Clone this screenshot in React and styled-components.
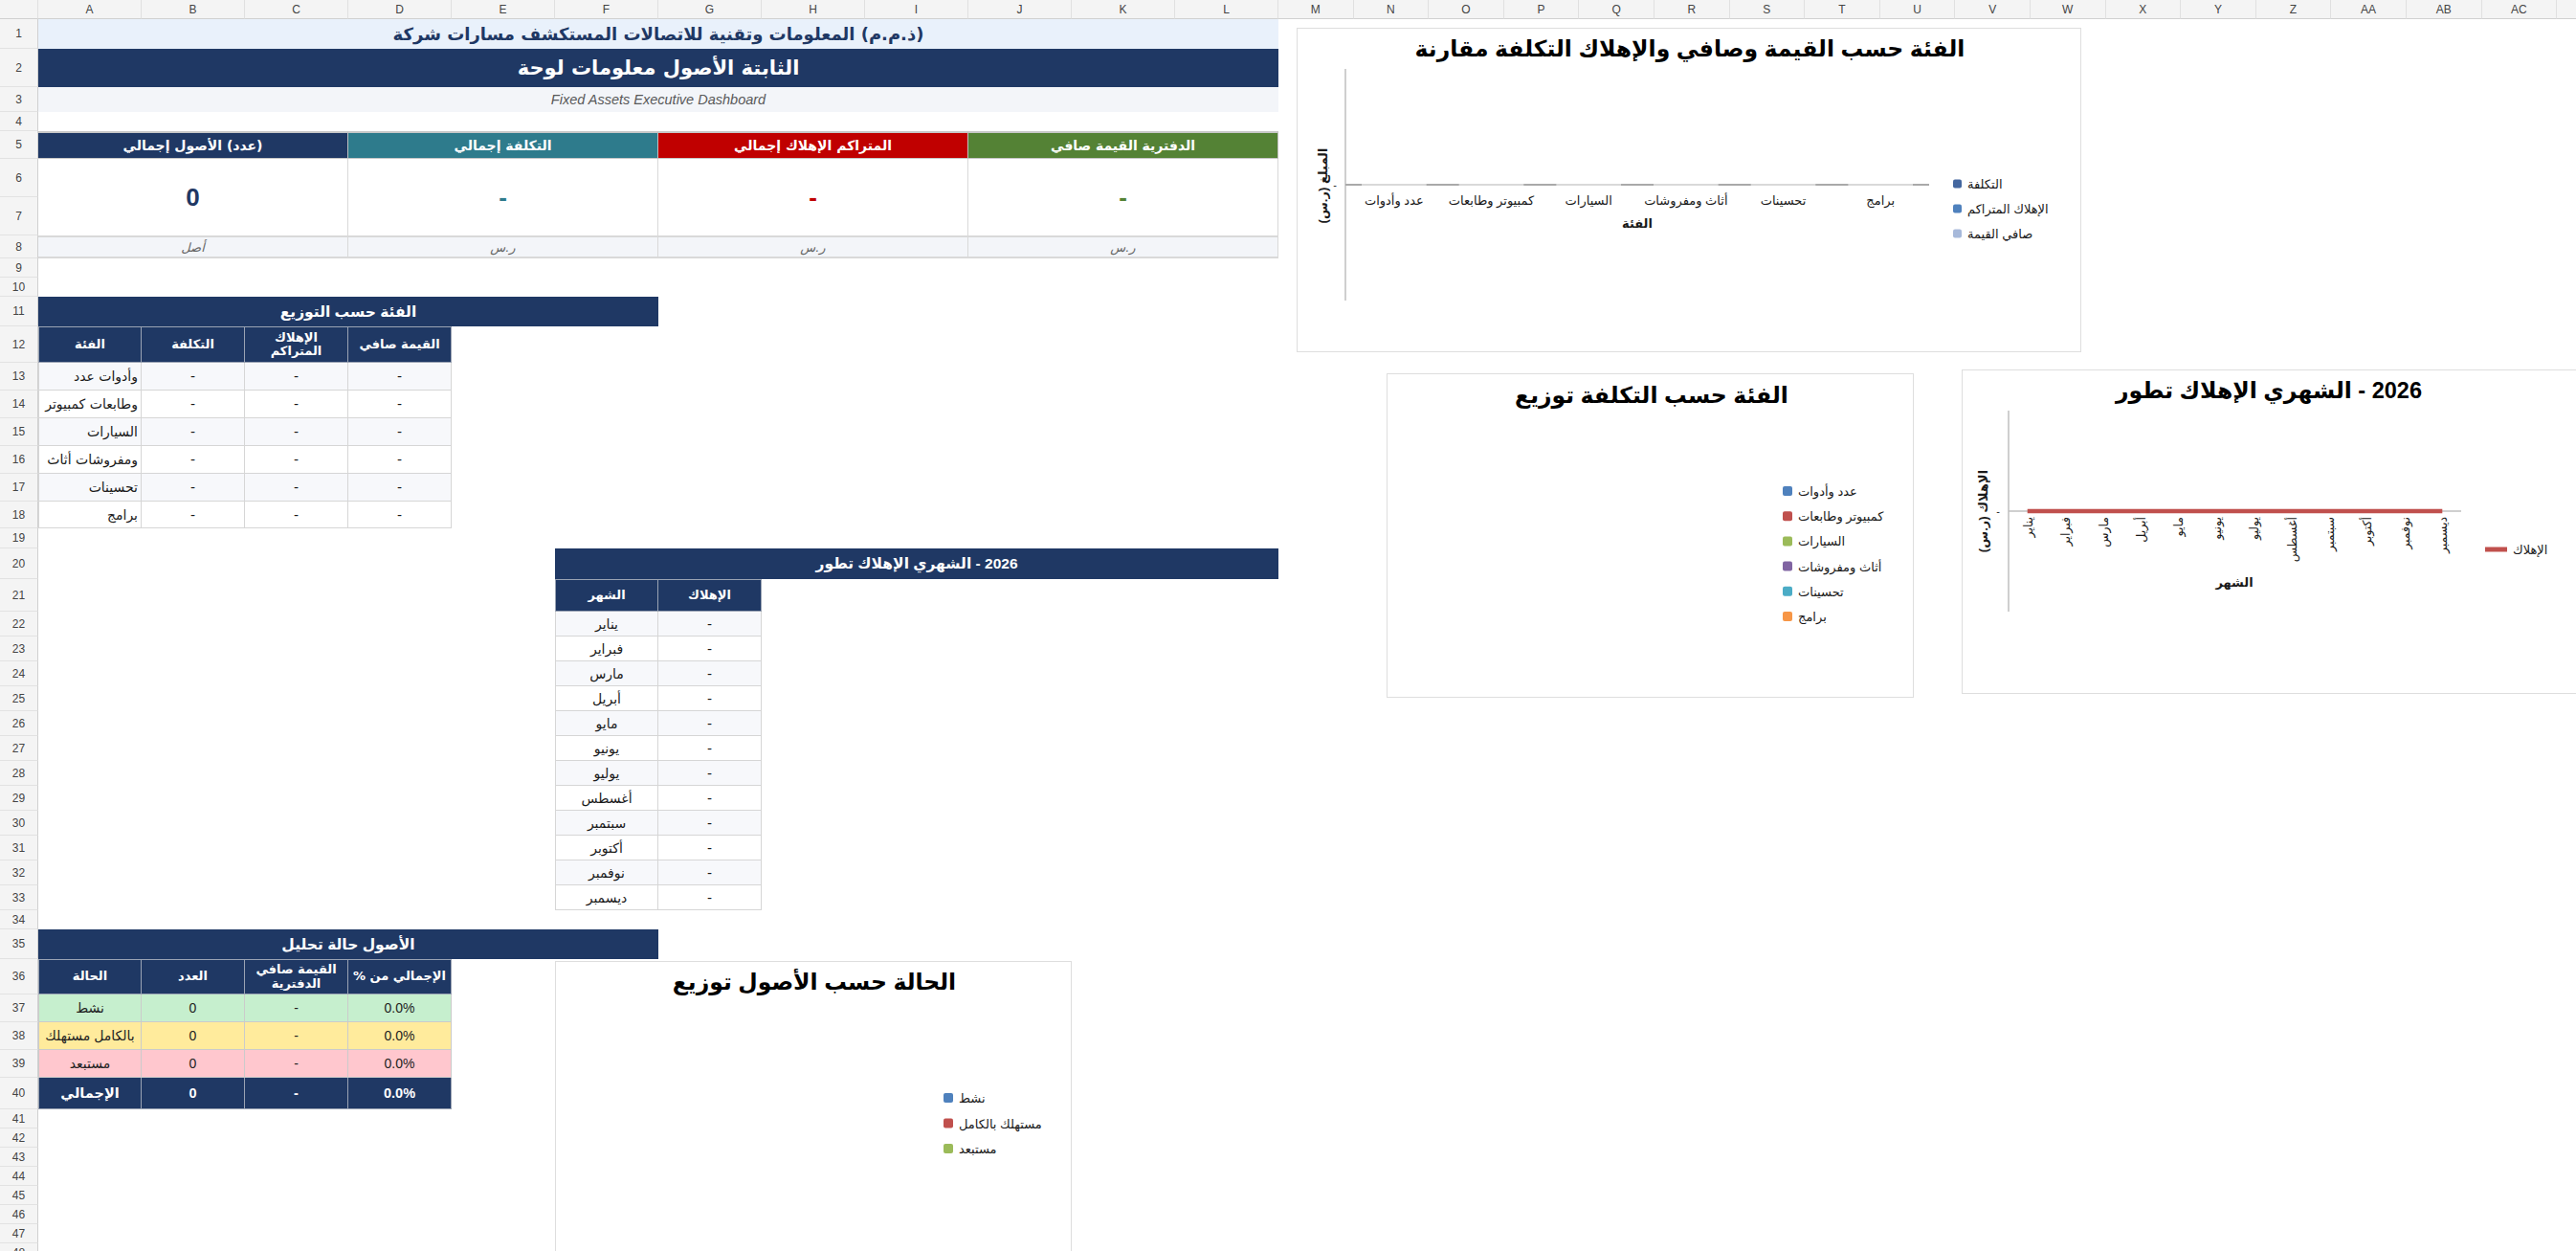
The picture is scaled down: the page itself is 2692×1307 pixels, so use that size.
import React from "react";
import styled, { createGlobalStyle, css } from "styled-components";

const NAVY = "#1f3864";
const UI_FONT = `"Liberation Sans", "DejaVu Sans", Arial, sans-serif`;
const AR_FONT = `"DejaVu Sans", "Liberation Sans", sans-serif`;
const CHART_FONT = `"Liberation Sans", "DejaVu Sans", sans-serif`;

const GlobalStyle = createGlobalStyle`
  html, body { margin: 0; padding: 0; background: #fff; }
  body { font-family: ${UI_FONT}; overflow: hidden; }
`;

/* sheet geometry: row-header column + A..L wide columns + M..AD narrow ones */
const COLS = [40, ...Array(12).fill(108), ...Array(17).fill(78.6), 80];
const ROWS = [
  20, 31, 40, 26, 20, 29, 40, 40, 24, 20, 20, 31, 38,
  29, 29, 29, 29, 29, 28, 21, 32, 34,
  ...Array(12).fill(26),
  20, 31, 37, 29, 29, 29, 33,
  ...Array(8).fill(20),
];
const LETTERS = [
  "A","B","C","D","E","F","G","H","I","J","K","L","M","N","O","P","Q","R","S","T",
  "U","V","W","X","Y","Z","AA","AB","AC","",
];

// 1-based sheet column / row -> grid line spans
const col = (a, b = a) => `${a + 1} / ${b + 2}`;
const row = (a, b = a) => `${a + 1} / ${b + 2}`;

const cellBase = css`
  grid-column: ${(p) => p.$c};
  grid-row: ${(p) => p.$r};
  display: flex;
  align-items: center;
  justify-content: center;
  box-sizing: border-box;
  min-width: 0;
  overflow: hidden;
  white-space: nowrap;
`;

const Sheet = styled.div`
  position: relative;
  display: grid;
  grid-template-columns: ${COLS.map((w) => w + "px").join(" ")};
  grid-template-rows: ${ROWS.map((h) => h + "px").join(" ")};
  width: 2692px;
  height: 1307px;
  overflow: hidden;
  background: #fff;
`;

const ColHead = styled.div`
  ${cellBase}
  background: #f4f4f4;
  color: #444;
  font-size: 12px;
  border-right: 1px solid #e0e0e0;
  border-bottom: 1px solid #d0d0d0;
`;

const RowHead = styled.div`
  ${cellBase}
  background: #f4f4f4;
  color: #444;
  font-size: 12px;
  border-right: 1px solid #d0d0d0;
  border-bottom: 1px solid #e2e2e2;
`;

const BrandBand = styled.div`
  ${cellBase}
  background: #e9f1fb;
  color: ${NAVY};
  font-family: ${AR_FONT};
  font-weight: bold;
  font-size: 18px;
`;

const TitleBand = styled.div`
  ${cellBase}
  background: ${NAVY};
  color: #fff;
  font-family: ${AR_FONT};
  font-weight: bold;
  font-size: 21px;
`;

const SubtitleBand = styled.div`
  ${cellBase}
  background: #f3f5f9;
  color: #595959;
  font-style: italic;
  font-size: 14.5px;
`;

const KpiHead = styled.div`
  ${cellBase}
  background: ${(p) => p.$bg};
  color: #fff;
  font-family: ${AR_FONT};
  font-weight: bold;
  font-size: 14px;
  border-top: 2px solid #c8c8c8;
  border-right: 1px solid #c0c0c0;
  border-bottom: 1px solid #c8c8c8;
`;

const KpiValue = styled.div`
  ${cellBase}
  background: #fff;
  color: ${(p) => p.$fg};
  font-weight: bold;
  font-size: 26px;
  border-right: 1px solid #d9d9d9;
`;

const KpiUnit = styled.div`
  ${cellBase}
  background: #f3f5f9;
  color: #666;
  font-family: ${AR_FONT};
  font-style: italic;
  font-size: 13px;
  border-top: 2px solid #d9d9d9;
  border-bottom: 2px solid #d9d9d9;
  border-right: 1px solid #d9d9d9;
`;

const SectionTitle = styled.div`
  ${cellBase}
  background: ${NAVY};
  color: #fff;
  font-family: ${CHART_FONT};
  font-weight: bold;
  font-size: 15.5px;
`;

const HeadCell = styled.div`
  ${cellBase}
  background: ${NAVY};
  color: #fff;
  font-family: ${AR_FONT};
  font-weight: bold;
  font-size: 13px;
  line-height: 1.1;
  text-align: center;
  white-space: normal;
  border-top: 1px solid #9aa3b3;
  border-right: 1px solid #9aa3b3;
  border-bottom: 1px solid #9aa3b3;
  border-left: ${(p) => (p.$lead ? "1px solid #9aa3b3" : "none")};
`;

/* Arabic cells are dir="rtl", so flex-start is the right-hand edge */
const BodyCell = styled.div`
  ${cellBase}
  background: ${(p) => (p.$zebra ? "#f7f8fb" : "#fff")};
  color: #1a1a1a;
  font-family: ${AR_FONT};
  font-size: 14px;
  justify-content: ${(p) => (p.$align === "start" ? "flex-start" : "center")};
  padding-right: ${(p) => (p.$align === "start" ? "3px" : "0")};
  border-right: 1px solid #d6d6d6;
  border-bottom: 1px solid #d6d6d6;
  border-left: ${(p) => (p.$lead ? "1px solid #d6d6d6" : "none")};
`;

const TONES = { ok: "#c6efce", warn: "#ffeb9c", bad: "#ffc7ce" };

const StatusCell = styled.div`
  ${cellBase}
  background: ${(p) => TONES[p.$tone]};
  color: #222;
  font-size: 14px;
  border-right: 1px solid #cbcbcb;
  border-bottom: 1px solid #cbcbcb;
  border-left: ${(p) => (p.$lead ? "1px solid #cbcbcb" : "none")};
`;

const TotalCell = styled.div`
  ${cellBase}
  background: ${NAVY};
  color: #fff;
  font-weight: bold;
  font-size: 14.5px;
  border-right: 1px solid #9aa3b3;
  border-bottom: 1px solid #9aa3b3;
  border-left: ${(p) => (p.$lead ? "1px solid #9aa3b3" : "none")};
`;

/* floating chart objects laid over the sheet */
const ChartFrame = styled.div`
  position: absolute;
  left: ${(p) => p.$left}px;
  top: ${(p) => p.$top}px;
  width: ${(p) => p.$w}px;
  height: ${(p) => p.$h}px;
  box-sizing: border-box;
  background: #fff;
  border: 1px solid #dedede;
  overflow: hidden;

  svg {
    display: block;
  }
`;

const SvgTitle = styled.text`
  font-family: ${CHART_FONT};
  font-size: 23.5px;
  font-weight: bold;
  fill: #000;
`;

const SvgLabel = styled.text`
  font-family: ${CHART_FONT};
  font-size: ${(p) => p.$size || 13}px;
  font-weight: ${(p) => (p.$bold ? "bold" : "normal")};
  fill: ${(p) => p.$fill || "#1a1a1a"};
`;

const CATEGORIES_CHART = ["عدد وأدوات", "كمبيوتر وطابعات", "السيارات", "أثاث ومفروشات", "تحسينات", "برامج"];
const CATEGORIES_TABLE = ["وأدوات عدد", "وطابعات كمبيوتر", "السيارات", "ومفروشات أثاث", "تحسينات", "برامج"];
const PIE_COLORS = ["#4f81bd", "#c0504d", "#9bbb59", "#8064a2", "#4bacc6", "#f79646"];
const MONTHS = ["يناير", "فبراير", "مارس", "أبريل", "مايو", "يونيو", "يوليو", "أغسطس", "سبتمبر", "أكتوبر", "نوفمبر", "ديسمبر"];

function LegendItem({ x, y, color, label, size = 10 }) {
  return (
    <g>
      <rect x={x} y={y - size / 2} width={size} height={size} rx="2" fill={color} />
      <SvgLabel x={x + size + 6} y={y + 5}>{label}</SvgLabel>
    </g>
  );
}

function CostCompareChart() {
  const left = 50;
  const right = 660;
  const axisY = 163;
  const step = (right - left) / 6;
  const series = [
    ["التكلفة", "#44679f"],
    ["الإهلاك المتراكم", "#4f81bd"],
    ["صافي القيمة", "#a7b9da"],
  ];
  return (
    <ChartFrame $left={1355} $top={29} $w={820} $h={339}>
      <svg width="820" height="339">
        <SvgTitle x="410" y="29" textAnchor="middle" direction="rtl">
          الفئة حسب القيمة وصافي والإهلاك التكلفة مقارنة
        </SvgTitle>
        <line x1={left} y1="42" x2={left} y2="284" stroke="#bfbfbf" strokeWidth="1.5" />
        <line x1={left} y1={axisY} x2={right} y2={axisY} stroke="#d9d9d9" strokeWidth="2" />
        {Array.from({ length: 7 }, (_, i) => {
          const bx = left + i * step;
          return (
            <line
              key={i}
              x1={Math.max(left, bx - 17)}
              x2={Math.min(right, bx + 17)}
              y1={axisY}
              y2={axisY}
              stroke="#a9a9a9"
              strokeWidth="2"
            />
          );
        })}
        <SvgLabel x={left - 9} y={axisY + 4} textAnchor="end" $size={11}>-</SvgLabel>
        {CATEGORIES_CHART.map((c, i) => (
          <SvgLabel key={c} x={left + step / 2 + i * step} y={184} textAnchor="middle">
            {c}
          </SvgLabel>
        ))}
        <SvgLabel x="355" y="208" textAnchor="middle" $bold>الفئة</SvgLabel>
        <SvgLabel
          x="31"
          y="164"
          textAnchor="middle"
          direction="rtl"
          transform="rotate(-90 31 164)"
          $bold
        >
          المبلغ (ر.س)
        </SvgLabel>
        {series.map(([label, color], i) => (
          <LegendItem key={label} x={685} y={162 + i * 26} color={color} label={label} size={9} />
        ))}
      </svg>
    </ChartFrame>
  );
}

function CostShareChart() {
  return (
    <ChartFrame $left={1449} $top={390} $w={551} $h={339}>
      <svg width="551" height="339">
        <SvgTitle x="276" y="30" textAnchor="middle" direction="rtl">
          الفئة حسب التكلفة توزيع
        </SvgTitle>
        {CATEGORIES_CHART.map((c, i) => (
          <LegendItem key={c} x={413} y={122 + i * 26.2} color={PIE_COLORS[i]} label={c} />
        ))}
      </svg>
    </ChartFrame>
  );
}

function MonthlyTrendChart() {
  const left = 48;
  const right = 521;
  const axisY = 147;
  const step = (right - left) / 12;
  return (
    <ChartFrame $left={2050} $top={386} $w={660} $h={339}>
      <svg width="660" height="339">
        <SvgTitle x="320" y="29" textAnchor="middle" direction="rtl">
          2026 - الشهري الإهلاك تطور
        </SvgTitle>
        <line x1={left} y1="42" x2={left} y2="252" stroke="#bfbfbf" strokeWidth="1.5" />
        <line x1={left} y1={axisY} x2={right} y2={axisY} stroke="#bfbfbf" strokeWidth="1.5" />
        <line
          x1={left + step / 2}
          y1={axisY}
          x2={right - step / 2}
          y2={axisY}
          stroke="#c0504d"
          strokeWidth="4.5"
        />
        <SvgLabel x={left - 9} y={axisY + 4} textAnchor="end" $size={11}>-</SvgLabel>
        {MONTHS.map((m, i) => {
          const x = left + step / 2 + i * step + 5;
          return (
            <SvgLabel
              key={m}
              x={x}
              y={153}
              textAnchor="end"
              transform={`rotate(-90 ${x} 153)`}
              $size={12.5}
            >
              {m}
            </SvgLabel>
          );
        })}
        <SvgLabel x="284" y="226" textAnchor="middle" $bold>الشهر</SvgLabel>
        <SvgLabel
          x="26"
          y="147"
          textAnchor="middle"
          direction="rtl"
          transform="rotate(-90 26 147)"
          $bold
        >
          الإهلاك (ر.س)
        </SvgLabel>
        <line x1="546" y1="187" x2="569" y2="187" stroke="#c0504d" strokeWidth="5" />
        <SvgLabel x="575" y="192">الإهلاك</SvgLabel>
      </svg>
    </ChartFrame>
  );
}

function StatusShareChart() {
  const items = [
    ["نشط", "#4f81bd"],
    ["مستهلك بالكامل", "#c0504d"],
    ["مستبعد", "#9bbb59"],
  ];
  return (
    <ChartFrame $left={580} $top={1004} $w={540} $h={310}>
      <svg width="540" height="310">
        <SvgTitle x="270" y="29" textAnchor="middle" direction="rtl">
          الحالة حسب الأصول توزيع
        </SvgTitle>
        {items.map(([label, color], i) => (
          <LegendItem key={label} x={405} y={142 + i * 26.5} color={color} label={label} />
        ))}
      </svg>
    </ChartFrame>
  );
}

const KPIS = [
  { title: "(عدد) الأصول إجمالي", bg: NAVY, fg: NAVY, value: "0", unit: "أصل", cols: [1, 3] },
  { title: "التكلفة إجمالي", bg: "#2e7b8c", fg: "#2e7b8c", value: "-", unit: "ر.س", cols: [4, 6] },
  { title: "المتراكم الإهلاك إجمالي", bg: "#c00000", fg: "#c00000", value: "-", unit: "ر.س", cols: [7, 9] },
  { title: "الدفترية القيمة صافي", bg: "#548235", fg: "#548235", value: "-", unit: "ر.س", cols: [10, 12] },
];

const STATUS_ROWS = [
  { name: "نشط", tone: "ok" },
  { name: "بالكامل مستهلك", tone: "warn" },
  { name: "مستبعد", tone: "bad" },
];

export default function App() {
  return (
    <>
      <GlobalStyle />
      <Sheet>
        <ColHead $c={col(0)} $r={row(0)} />
        {LETTERS.map((l, i) => (
          <ColHead key={i} $c={col(i + 1)} $r={row(0)}>{l}</ColHead>
        ))}
        {Array.from({ length: 48 }, (_, i) => (
          <RowHead key={i} $c={col(0)} $r={row(i + 1)}>{i + 1}</RowHead>
        ))}

        <BrandBand $c={col(1, 12)} $r={row(1)} dir="rtl">
          (ذ.م.م) المعلومات وتقنية للاتصالات المستكشف مسارات شركة
        </BrandBand>
        <TitleBand $c={col(1, 12)} $r={row(2)} dir="rtl">
          الثابتة الأصول معلومات لوحة
        </TitleBand>
        <SubtitleBand $c={col(1, 12)} $r={row(3)}>
          Fixed Assets Executive Dashboard
        </SubtitleBand>

        {KPIS.map((k) => (
          <React.Fragment key={k.title}>
            <KpiHead $c={col(k.cols[0], k.cols[1])} $r={row(5)} $bg={k.bg} dir="rtl">
              {k.title}
            </KpiHead>
            <KpiValue $c={col(k.cols[0], k.cols[1])} $r={row(6, 7)} $fg={k.fg}>
              {k.value}
            </KpiValue>
            <KpiUnit $c={col(k.cols[0], k.cols[1])} $r={row(8)} dir="rtl">
              {k.unit}
            </KpiUnit>
          </React.Fragment>
        ))}

        {/* distribution by category */}
        <SectionTitle $c={col(1, 6)} $r={row(11)} dir="rtl">الفئة حسب التوزيع</SectionTitle>
        <HeadCell $c={col(1)} $r={row(12)} $lead dir="rtl">الفئة</HeadCell>
        <HeadCell $c={col(2)} $r={row(12)} dir="rtl">التكلفة</HeadCell>
        <HeadCell $c={col(3)} $r={row(12)} dir="rtl">الإهلاك<br />المتراكم</HeadCell>
        <HeadCell $c={col(4)} $r={row(12)} dir="rtl">القيمة صافي</HeadCell>
        {CATEGORIES_TABLE.map((name, i) => {
          const r = row(13 + i);
          const zebra = i % 2 === 0;
          return (
            <React.Fragment key={name}>
              <BodyCell $c={col(1)} $r={r} $zebra={zebra} $align="start" $lead dir="rtl">
                {name}
              </BodyCell>
              <BodyCell $c={col(2)} $r={r} $zebra={zebra}>-</BodyCell>
              <BodyCell $c={col(3)} $r={r} $zebra={zebra}>-</BodyCell>
              <BodyCell $c={col(4)} $r={r} $zebra={zebra}>-</BodyCell>
            </React.Fragment>
          );
        })}

        {/* monthly depreciation */}
        <SectionTitle $c={col(6, 12)} $r={row(20)} dir="rtl">2026 - الشهري الإهلاك تطور</SectionTitle>
        <HeadCell $c={col(6)} $r={row(21)} $lead dir="rtl">الشهر</HeadCell>
        <HeadCell $c={col(7)} $r={row(21)} dir="rtl">الإهلاك</HeadCell>
        {MONTHS.map((m, i) => {
          const r = row(22 + i);
          const zebra = i % 2 === 0;
          return (
            <React.Fragment key={m}>
              <BodyCell $c={col(6)} $r={r} $zebra={zebra} $lead dir="rtl">{m}</BodyCell>
              <BodyCell $c={col(7)} $r={r} $zebra={zebra}>-</BodyCell>
            </React.Fragment>
          );
        })}

        {/* asset status analysis */}
        <SectionTitle $c={col(1, 6)} $r={row(35)} dir="rtl">الأصول حالة تحليل</SectionTitle>
        <HeadCell $c={col(1)} $r={row(36)} $lead dir="rtl">الحالة</HeadCell>
        <HeadCell $c={col(2)} $r={row(36)} dir="rtl">العدد</HeadCell>
        <HeadCell $c={col(3)} $r={row(36)} dir="rtl">القيمة صافي<br />الدفترية</HeadCell>
        <HeadCell $c={col(4)} $r={row(36)} dir="rtl">الإجمالي من %</HeadCell>
        {STATUS_ROWS.map((s, i) => {
          const r = row(37 + i);
          return (
            <React.Fragment key={s.name}>
              <StatusCell $c={col(1)} $r={r} $tone={s.tone} $lead dir="rtl">{s.name}</StatusCell>
              <StatusCell $c={col(2)} $r={r} $tone={s.tone}>0</StatusCell>
              <StatusCell $c={col(3)} $r={r} $tone={s.tone}>-</StatusCell>
              <StatusCell $c={col(4)} $r={r} $tone={s.tone}>0.0%</StatusCell>
            </React.Fragment>
          );
        })}
        <TotalCell $c={col(1)} $r={row(40)} $lead dir="rtl">الإجمالي</TotalCell>
        <TotalCell $c={col(2)} $r={row(40)}>0</TotalCell>
        <TotalCell $c={col(3)} $r={row(40)}>-</TotalCell>
        <TotalCell $c={col(4)} $r={row(40)}>0.0%</TotalCell>

        <CostCompareChart />
        <CostShareChart />
        <MonthlyTrendChart />
        <StatusShareChart />
      </Sheet>
    </>
  );
}
